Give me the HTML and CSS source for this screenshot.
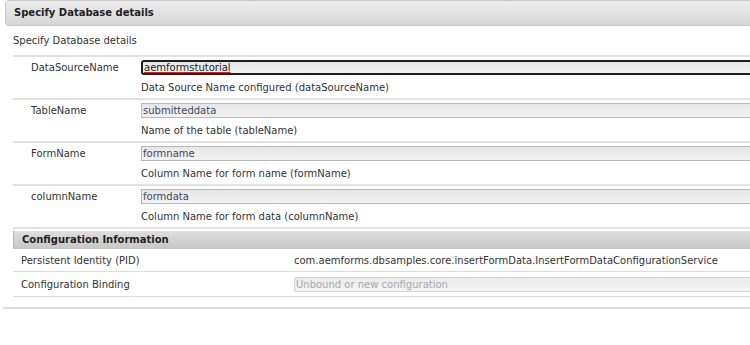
FILE: index.html
```html
<!DOCTYPE html>
<html lang="en">
<head>
    <meta charset="UTF-8">
    <title>Specify Database details</title>
    <link rel="stylesheet" href="styles.css">
</head>
<body>
    <div class="panel">
        <div class="panel-head">Specify Database details</div>
        <div class="panel-body">
            <div class="panel-desc">Specify Database details</div>

            <div class="prop-row">
                <div class="prop-label">DataSourceName</div>
                <div class="prop-value">
                    <div class="field focused"><span class="misspelled">aemformstutorial</span></div>
                    <div class="prop-help">Data Source Name configured (dataSourceName)</div>
                </div>
            </div>
            <div class="prop-row">
                <div class="prop-label">TableName</div>
                <div class="prop-value">
                    <div class="field">submitteddata</div>
                    <div class="prop-help">Name of the table (tableName)</div>
                </div>
            </div>
            <div class="prop-row">
                <div class="prop-label">FormName</div>
                <div class="prop-value">
                    <div class="field">formname</div>
                    <div class="prop-help">Column Name for form name (formName)</div>
                </div>
            </div>
            <div class="prop-row">
                <div class="prop-label">columnName</div>
                <div class="prop-value">
                    <div class="field">formdata</div>
                    <div class="prop-help">Column Name for form data (columnName)</div>
                </div>
            </div>

            <div class="config">
                <div class="config-head">Configuration Information</div>
                <div class="config-row">
                    <div class="config-label">Persistent Identity (PID)</div>
                    <div class="config-value">com.aemforms.dbsamples.core.insertFormData.InsertFormDataConfigurationService</div>
                </div>
                <div class="config-row">
                    <div class="config-label">Configuration Binding</div>
                    <div class="config-value">
                        <div class="field disabled">Unbound or new configuration</div>
                    </div>
                </div>
            </div>
        </div>
    </div>
</body>
</html>
```

FILE: styles.css
```css
body {
    margin: 0;
    background: #ffffff;
    font-family: "DejaVu Sans", Verdana, sans-serif;
    font-size: 10px;
    color: #333333;
    overflow: hidden;
}
.panel {
    margin-left: 3px;
    width: 760px;
    border-bottom: 2px solid #dddddd;
    padding-bottom: 10px;
}
.panel-head {
    margin-left: 2px;
    height: 24px;
    line-height: 24px;
    padding-left: 8px;
    font-weight: bold;
    color: #222222;
    background: linear-gradient(#ececec, #d6d6d6);
    border: 1px solid #c8c8c8;
    border-radius: 4px 0 0 4px;
}
.panel-body {
    padding-left: 10px;
}
.panel-desc {
    height: 29px;
    line-height: 29px;
}
.prop-row {
    display: flex;
    border-top: 2px solid #e2e2e2;
    height: 41px;
}
.prop-label {
    flex-shrink: 0;
    width: 110px;
    padding-left: 18px;
    padding-top: 5px;
}
.prop-value {
    flex-shrink: 0;
    padding-top: 3px;
}
.field {
    width: 620px;
    height: 13px;
    line-height: 13px;
    padding-left: 1px;
    color: #3b4a66;
    background: linear-gradient(#e6e6e6, #f2f2f2);
    border: 1px solid #b8b8b8;
    border-right: none;
}
.field.focused {
    border: 2px solid #1e1e1e;
    border-radius: 3px;
    height: 11px;
    line-height: 11px;
    color: #222222;
}
.misspelled {
    text-decoration: underline;
    text-decoration-color: #d02020;
    text-underline-offset: 1px;
}
.prop-help {
    margin-top: 7px;
}
.config {
    border-top: 2px solid #e2e2e2;
    padding-top: 2px;
}
.config-head {
    height: 18px;
    line-height: 18px;
    padding-left: 8px;
    font-weight: bold;
    color: #222222;
    background: linear-gradient(#dedede, #c6c6c6);
    border-left: 1px solid #b8b8b8;
}
.config-row {
    display: flex;
    align-items: center;
    border-bottom: 1px solid #dddddd;
    height: 22px;
}
.config-row + .config-row {
    height: 24px;
}
.config-label {
    flex-shrink: 0;
    width: 273px;
    padding-left: 8px;
}
.config-value {
    flex-shrink: 0;
}
.field.disabled {
    width: 460px;
    color: #aaaaaa;
    border-radius: 3px;
    border-color: #d4d4d4;
    background: linear-gradient(#ebebeb, #f3f3f3);
}
```
